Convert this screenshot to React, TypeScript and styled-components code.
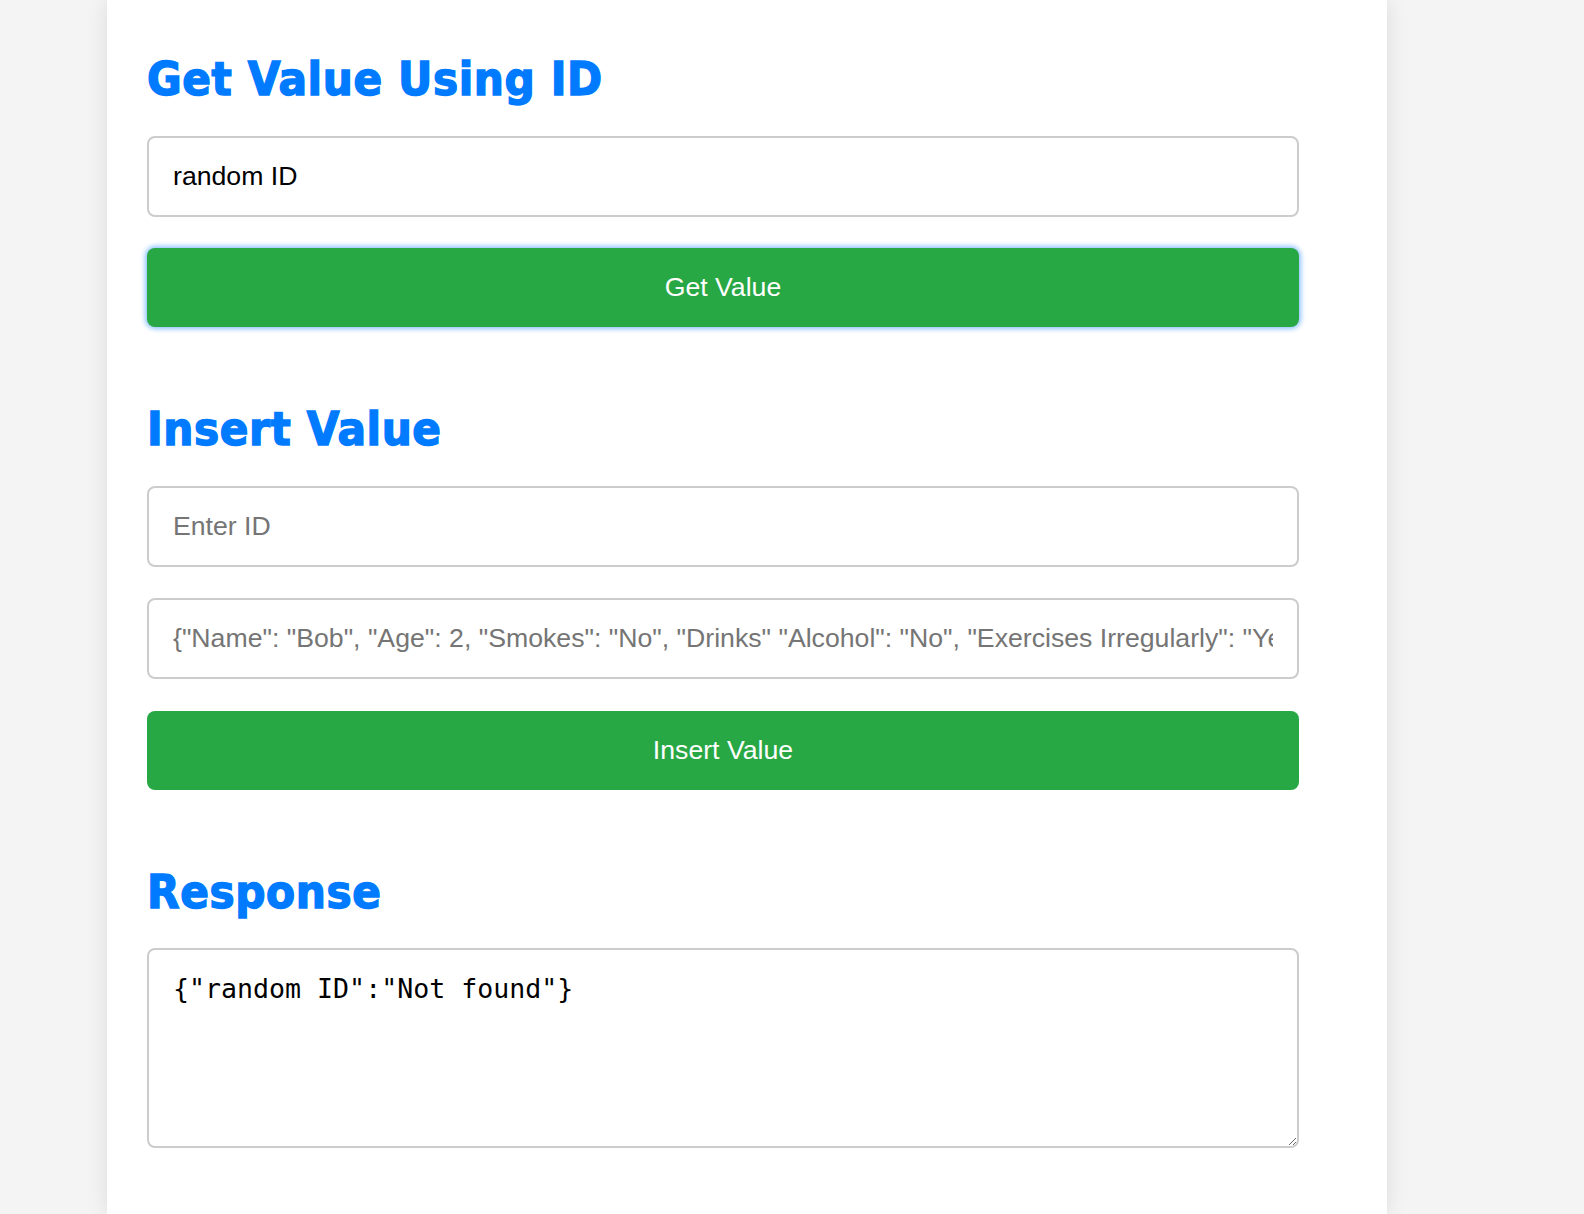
import React from 'react';
import styled, { createGlobalStyle, css } from 'styled-components';

const GlobalStyle = createGlobalStyle`
html, body {
    margin: 0;
    padding: 0;
    background-color: #f4f4f4;
    font-family: "Liberation Sans", Arial, sans-serif;
}
`

const Page = styled.div`
display: flex;
justify-content: flex-start;
`

const Card = styled.main`
box-sizing: border-box;
width: 1280px;
min-height: 100vh;
margin-left: 107px;
padding: 51px 40px 40px 40px;
background-color: #ffffff;
box-shadow: 0 0 20px rgba(0, 0, 0, 0.1);
`

const Section = styled.section`
display: flex;
flex-direction: column;
width: 1152px;

& + & {
    margin-top: 74px;
}
`

const Heading = styled.h2`
margin: 0 0 28.5px 0;
font-family: Tahoma, "DejaVu Sans", sans-serif;
font-stretch: semi-condensed;
font-size: 47px;
line-height: 56px;
font-weight: bold;
letter-spacing: 0.6px;
color: #007bff;
-webkit-text-stroke: 1.4px #007bff;
`

const Fields = styled.div`
display: flex;
flex-direction: column;
gap: 31.5px;
`

const fieldBase = css`
box-sizing: border-box;
width: 100%;
border: 2px solid #cccccc;
border-radius: 8px;
background-color: #ffffff;
color: #000000;
outline: none;
`

const Input = styled.input`
${fieldBase}
height: 81px;
padding: 0 24px;
font-family: "Liberation Sans", Arial, sans-serif;
font-size: 26.67px;

&::placeholder {
    color: #757575;
}
`

const Button = styled.button<{ $focused?: boolean }>`
box-sizing: border-box;
width: 100%;
height: 79px;
border: none;
border-radius: 8px;
background-color: #28a745;
color: #ffffff;
font-family: "Liberation Sans", Arial, sans-serif;
font-size: 26.67px;
cursor: pointer;
box-shadow: ${(p) => (p.$focused ? '0 0 5px 2px rgba(0, 123, 255, 0.45)' : 'none')};

&:hover {
    background-color: #23963e;
}
`

const Output = styled.textarea`
${fieldBase}
height: 200px;
padding: 23px 24px 21px 24px;
font-family: "DejaVu Sans Mono", Menlo, monospace;
font-size: 26.6px;
resize: vertical;
`

const App: React.FC = () => {
    return (
        <>
            <GlobalStyle />
            <Page>
                <Card>
                    <Section>
                        <Heading>Get Value Using ID</Heading>
                        <Fields>
                            <Input type="text" placeholder="Enter ID" defaultValue="random ID" />
                            <Button $focused>Get Value</Button>
                        </Fields>
                    </Section>

                    <Section>
                        <Heading>Insert Value</Heading>
                        <Fields>
                            <Input type="text" placeholder="Enter ID" />
                            <Input
                                type="text"
                                placeholder={'{"Name": "Bob", "Age": 2, "Smokes": "No", "Drinks" "Alcohol": "No", "Exercises Irregularly": "Yes"}'}
                            />
                            <Button>Insert Value</Button>
                        </Fields>
                    </Section>

                    <Section>
                        <Heading>Response</Heading>
                        <Output readOnly defaultValue={'{"random ID":"Not found"}'} />
                    </Section>
                </Card>
            </Page>
        </>
    )
}

export default App
